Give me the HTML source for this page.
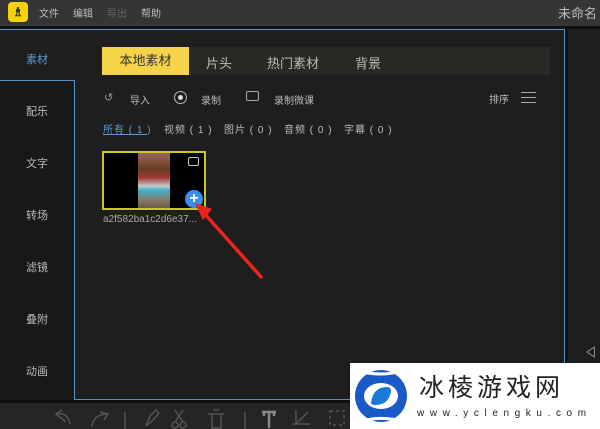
<!DOCTYPE html>
<html><head><meta charset="utf-8"><style>
*{margin:0;padding:0;box-sizing:border-box}
body{width:600px;height:429px;overflow:hidden;background:#1e1e1e;position:relative;font-family:"Liberation Sans","Noto Sans CJK SC",sans-serif;color:#bbb}
.a{position:absolute}
.t{font-size:11px;white-space:nowrap}
</style></head><body>
<div class="a" style="left:0;top:0;width:600px;height:26px;background:#353535"></div>
<div class="a" style="left:8px;top:2px;width:20px;height:20px;background:#f5d20a;border-radius:4px;color:#222;font-size:12px;text-align:center;line-height:20px;font-weight:bold">&#x2657;</div>
<div class="a t" style="left:39px;top:5px;font-size:10px;color:#bbb">文件</div>
<div class="a t" style="left:73px;top:5px;font-size:10px;color:#bbb">编辑</div>
<div class="a t" style="left:107px;top:5px;font-size:10px;color:#666">导出</div>
<div class="a t" style="left:141px;top:5px;font-size:10px;color:#bbb">帮助</div>
<div class="a t" style="left:558px;top:3px;font-size:13px;color:#bbb">未命名</div>
<div class="a" style="left:0;top:26px;width:600px;height:3px;background:#111"></div>
<div class="a" style="left:0;top:30px;width:74px;height:370px;background:#1e1e1e"></div>
<div class="a" style="left:0;top:80px;width:75px;height:320px;background:#181818;border-top:1px solid #5a8fc8;border-right:1px solid #5a8fc8"></div>
<div class="a" style="left:74px;top:29px;width:491px;height:371px;border:1px solid #5a8fc8;border-left:none"></div>
<div class="a" style="left:0;top:29px;width:565px;height:1px;background:#5a8fc8"></div>
<div class="a" style="left:565px;top:29px;width:3px;height:371px;background:#111"></div>
<div class="a" style="left:568px;top:29px;width:32px;height:374px;background:#1e1e1e"></div>
<div class="a" style="left:586px;top:346px;width:0;height:0;border-top:6px solid transparent;border-bottom:6px solid transparent;border-right:9px solid #888"></div>
<div class="a" style="left:588px;top:348px;width:0;height:0;border-top:4px solid transparent;border-bottom:4px solid transparent;border-right:6px solid #1e1e1e"></div>
<div class="a t" style="left:26px;top:51px;color:#5a9ad8">素材</div>
<div class="a t" style="left:26px;top:103px">配乐</div>
<div class="a t" style="left:26px;top:155px">文字</div>
<div class="a t" style="left:26px;top:207px">转场</div>
<div class="a t" style="left:26px;top:259px">滤镜</div>
<div class="a t" style="left:26px;top:311px">叠附</div>
<div class="a t" style="left:26px;top:363px">动画</div>
<div class="a" style="left:102px;top:47px;width:448px;height:28px;background:#2a2824"></div>
<div class="a" style="left:102px;top:47px;width:87px;height:28px;background:#f5d44a;color:#333;font-size:13px;text-align:center;line-height:28px">本地素材</div>
<div class="a t" style="left:206px;top:53px;font-size:13px">片头</div>
<div class="a t" style="left:267px;top:53px;font-size:13px">热门素材</div>
<div class="a t" style="left:355px;top:53px;font-size:13px">背景</div>
<div class="a t" style="left:104px;top:91px;font-size:11px;color:#999">↺</div>
<div class="a t" style="left:130px;top:92px;font-size:10px">导入</div>
<div class="a" style="left:174px;top:91px;width:13px;height:13px;border:1.5px solid #bbb;border-radius:50%"></div>
<div class="a" style="left:178px;top:95px;width:5px;height:5px;background:#ddd;border-radius:50%"></div>
<div class="a t" style="left:201px;top:92px;font-size:10px">录制</div>
<div class="a" style="left:246px;top:91px;width:13px;height:10px;border:1px solid #aaa;border-radius:2px"></div>
<div class="a t" style="left:274px;top:92px;font-size:10px">录制微课</div>
<div class="a t" style="left:489px;top:91px;font-size:10px">排序</div>
<div class="a" style="left:521px;top:92px;width:15px;height:11px;border-top:1px solid #aaa;border-bottom:1px solid #aaa"></div>
<div class="a" style="left:521px;top:97px;width:15px;height:1px;background:#aaa"></div>
<div class="a t" style="left:103px;top:121px;font-size:10px;color:#5a9ad8;letter-spacing:1px">所有 ( 1 )</div>
<div class="a" style="left:103px;top:134px;width:44px;height:1px;background:#5a9ad8"></div>
<div class="a t" style="left:164px;top:121px;font-size:10px;letter-spacing:1px">视频 ( 1 )</div>
<div class="a t" style="left:224px;top:121px;font-size:10px;letter-spacing:1px">图片 ( 0 )</div>
<div class="a t" style="left:284px;top:121px;font-size:10px;letter-spacing:1px">音频 ( 0 )</div>
<div class="a t" style="left:344px;top:121px;font-size:10px;letter-spacing:1px">字幕 ( 0 )</div>
<div class="a" style="left:102px;top:151px;width:104px;height:59px;border:2px solid #c8c82a;background:#000"></div>
<div class="a" style="left:138px;top:153px;width:32px;height:55px;background:linear-gradient(180deg,#9a6a5a 0%,#6a3a22 30%,#a03a3a 45%,#c8c8c8 60%,#3ab0c8 68%,#8a7a6a 85%,#6a5a4a 100%)"></div>
<div class="a" style="left:188px;top:157px;width:11px;height:9px;border:1px solid #ccc;border-radius:2px"></div>
<div class="a" style="left:185px;top:190px;width:18px;height:18px;background:#3a8ef0;border-radius:50%;color:#fff;font-size:16px;font-weight:bold;text-align:center;line-height:18px">+</div>
<div class="a t" style="left:103px;top:214px;font-size:10px;color:#aaa">a2f582ba1c2d6e37...</div>
<svg class="a" style="left:0;top:0" width="600" height="429">
<line x1="262" y1="278" x2="203" y2="212" stroke="#e8251e" stroke-width="3.5"/>
<polygon points="195,203 212,209 203,220" fill="#e8251e"/>
</svg>
<div class="a" style="left:0;top:400px;width:600px;height:3px;background:#111"></div>
<div class="a" style="left:0;top:403px;width:600px;height:26px;background:#252525"></div>
<svg class="a" style="left:50px;top:408px" width="300" height="21" fill="none" stroke="#555" stroke-width="1.5">
<path d="M16 14 L6 6 L12 2 M6 6 Q18 4 20 16"/>
<path d="M50 4 L58 6 L54 12 M58 6 Q44 6 42 18"/>
<line x1="75" y1="4" x2="75" y2="21"/>
<path d="M96 18 L100 8 L106 2 L109 5 L103 12 Z"/>
<path d="M125 2 L133 14 M133 2 L125 14"/><circle cx="125" cy="17" r="3"/><circle cx="133" cy="17" r="3"/>
<path d="M158 6 H174 M162 6 V20 H171 V6 M163 2 H169"/>
<line x1="195" y1="4" x2="195" y2="21"/>
<path d="M212 4 H226 M219 4 V20 M214 4 V8 M224 4 V8" stroke="#888" stroke-width="2.5"/>
<path d="M246 2 V16 H260 M242 16 H246 M258 4 L246 16"/>
<rect x="280" y="3" width="14" height="14" stroke-dasharray="3 3"/>
</svg>
<div class="a" style="left:350px;top:363px;width:250px;height:66px;background:#fff"></div>
<svg class="a" style="left:353px;top:367px" width="60" height="60">
<circle cx="28" cy="29" r="26" fill="#1a5ac8"/>
<ellipse cx="28" cy="29" rx="17" ry="13" fill="#fff"/>
<path d="M18 36 Q20 20 34 20 Q38 20 38 24 Q36 38 22 38 Q18 38 18 36Z" fill="#1a7ad8"/>
<path d="M4 4 Q30 10 48 4" stroke="#fff" stroke-width="3" fill="none"/>
<path d="M10 54 Q30 48 56 56" stroke="#fff" stroke-width="3" fill="none"/>
</svg>
<div class="a t" style="left:419px;top:368px;font-size:25px;color:#222;letter-spacing:4px">冰棱游戏网</div>
<div class="a t" style="left:417px;top:408px;font-size:10px;color:#222;letter-spacing:5.6px">www.yclengku.com</div>
</body></html>
